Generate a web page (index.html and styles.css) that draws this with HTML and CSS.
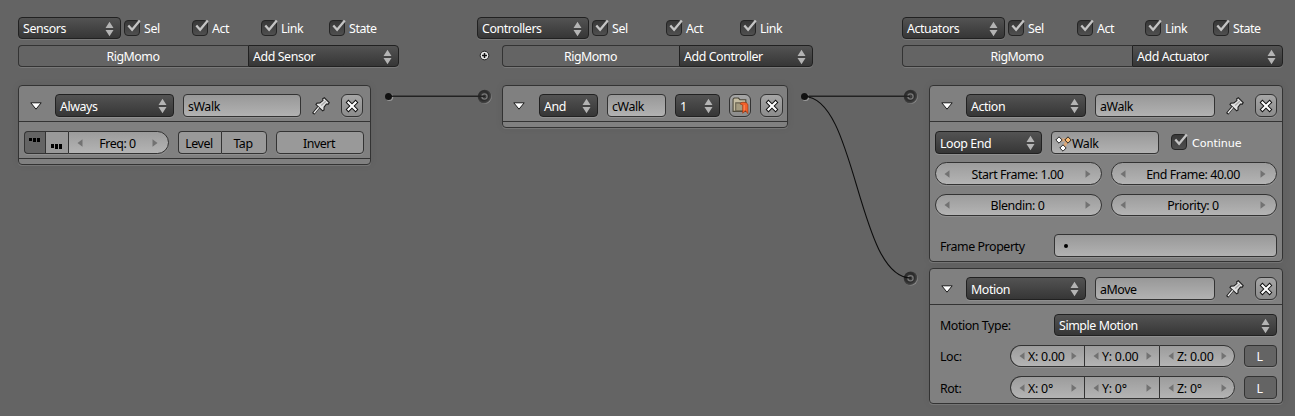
FILE: index.html
```
<!DOCTYPE html>
<html lang="en">
<head>
<meta charset="utf-8">
<title>Logic Editor</title>
<link rel="stylesheet" href="styles.css">
</head>
<body>
<svg class="defs" width="0" height="0">
  <defs>
    <symbol id="updown" viewBox="0 0 9 16"><path d="M4.5 .8 8.5 7H.5ZM.5 9h8L4.5 15.2Z" fill="#b4b4b4"/></symbol>
    <symbol id="check" viewBox="0 0 20 20"><rect x="1.5" y="3.500" width="15" height="15" rx="3.500" fill="url(#dark)" stroke="#252525"/><path d="M5.300 8.500 9.100 12.700 16.800 3.600" fill="none" stroke="#c4c4c4" stroke-width="2.300"/></symbol>
    <symbol id="tri" viewBox="0 0 12 8"><path d="M.8 .8H11.200L6 7.200Z" fill="#fff" stroke="#1a1a1a" stroke-linejoin="round"/></symbol>
    <symbol id="left" viewBox="0 0 6 8"><path d="M5.500 .3V7.700L.5 4Z" fill="#727272"/></symbol>
    <symbol id="right" viewBox="0 0 6 8"><path d="M.5 .3V7.700L5.500 4Z" fill="#727272"/></symbol>
    <symbol id="close" viewBox="0 0 14 14"><path d="M2 2 12 12M12 2 2 12" stroke="#111" stroke-width="4"/><path d="M2.700 2.700 11.300 11.300M11.300 2.700 2.700 11.300" stroke="#fff" stroke-width="2.100"/></symbol>
    <symbol id="pin" viewBox="0 0 16 16"><path d="M5.500 9.500 1 15" stroke="#222" stroke-width="2.600"/><path d="M9.500 1.500 11 .7 15.300 5 14.500 6.300 12.800 6.300 10.700 9 10.700 11.500 9.500 12.300 3.500 6.700 4.500 5.400 7 5.300 9.700 3.200Z" fill="#e2e2e2" stroke="#222"/><path d="M6 9.200 1.800 14.200" stroke="#f2f2f2" stroke-width="1.200"/><path d="M8.200 7.600 12.300 3.800" stroke="#aaa" stroke-width="1.300"/></symbol>
    <linearGradient id="dark" x1="0" y1="0" x2="0" y2="1"><stop offset="0" stop-color="#373737"/><stop offset="1" stop-color="#505050"/></linearGradient>
    <radialGradient id="ball" cx=".42" cy=".42" r=".62"><stop offset="0" stop-color="#444"/><stop offset=".55" stop-color="#2a2a2a"/><stop offset=".82" stop-color="#444"/><stop offset="1" stop-color="#aaa"/></radialGradient>
  </defs>
</svg>

<main class="editor">
  <section class="column sensors">
    <div class="filters">
      <div class="menu w103">Sensors<svg><use href="#updown"/></svg></div>
      <label class="toggle w68"><svg><use href="#check"/></svg>Sel</label>
      <label class="toggle w69"><svg><use href="#check"/></svg>Act</label>
      <label class="toggle w68"><svg><use href="#check"/></svg>Link</label>
      <label class="toggle"><svg><use href="#check"/></svg>State</label>
    </div>
    <div class="owner"><div class="name">RigMomo</div><div class="menu w151">Add Sensor<svg><use href="#updown"/></svg></div></div>
    <article class="brick">
      <header>
        <svg class="tri"><use href="#tri"/></svg>
        <div class="menu w119">Always<svg><use href="#updown"/></svg></div>
        <div class="field w118">sWalk</div>
        <svg class="pin"><use href="#pin"/></svg>
        <div class="btn square"><svg><use href="#close"/></svg></div>
      </header>
      <div class="row sense">
        <div class="group">
          <div class="btn pulse on"><svg viewBox="0 0 12 5" shape-rendering="crispEdges"><path d="M0 0h3v3H0zM4 0h3v4H4zM8 0h3v4H8z"/></svg></div>
          <div class="btn pulse low"><svg viewBox="0 0 12 5" shape-rendering="crispEdges"><path d="M0 0h3v4H0zM4 0h3v5H4zM8 0h3v5H8z"/></svg></div>
          <div class="num freq"><svg><use href="#left"/></svg><span>Freq: 0</span><svg><use href="#right"/></svg></div>
        </div>
        <div class="group"><div class="btn w44">Level</div><div class="btn w46">Tap</div></div>
        <div class="btn w88">Invert</div>
      </div>
      <footer></footer>
    </article>
  </section>

  <section class="column controllers">
    <div class="filters">
      <div class="menu w112">Controllers<svg><use href="#updown"/></svg></div>
      <label class="toggle w74"><svg><use href="#check"/></svg>Sel</label>
      <label class="toggle w74"><svg><use href="#check"/></svg>Act</label>
      <label class="toggle"><svg><use href="#check"/></svg>Link</label>
    </div>
    <div class="owner">
      <svg class="plus" viewBox="0 0 11 11"><circle cx="5.500" cy="5.500" r="4.300" fill="#e8e8e8" stroke="#222"/><path d="M5.500 3v5M3 5.500h5" stroke="#111" stroke-width="1.500"/></svg>
      <div class="name">RigMomo</div><div class="menu w134">Add Controller<svg><use href="#updown"/></svg></div>
    </div>
    <article class="brick">
      <header>
        <svg class="tri"><use href="#tri"/></svg>
        <div class="menu w59">And<svg><use href="#updown"/></svg></div>
        <div class="field w59">cWalk</div>
        <div class="menu w45">1<svg><use href="#updown"/></svg></div>
        <div class="btn square mark"><svg viewBox="0 0 16 16"><path d="M1 13.500V2L2 1H6L7.500 2.500H13V13.500Z" fill="#c4bca2" stroke="#4a4639"/><path d="M3.500 13V5.500H13.500V13Z" fill="#a49b80" stroke="#686250"/><path d="M7.500 6.500C8 4.500 14.500 4 15 7.500V15.800L12.800 13 10 15.300V7.500Z" fill="#f2602a" stroke="#8d2b08" stroke-width=".5"/><path d="M11.500 12.500V7.500" stroke="#ff9468" stroke-width=".8"/></svg></div>
        <div class="btn square"><svg><use href="#close"/></svg></div>
      </header>
      <footer></footer>
    </article>
  </section>

  <section class="column actuators">
    <div class="filters">
      <div class="menu w103">Actuators<svg><use href="#updown"/></svg></div>
      <label class="toggle w69"><svg><use href="#check"/></svg>Sel</label>
      <label class="toggle w68"><svg><use href="#check"/></svg>Act</label>
      <label class="toggle w68"><svg><use href="#check"/></svg>Link</label>
      <label class="toggle"><svg><use href="#check"/></svg>State</label>
    </div>
    <div class="owner"><div class="name">RigMomo</div><div class="menu w151">Add Actuator<svg><use href="#updown"/></svg></div></div>
    <article class="brick">
      <header>
        <svg class="tri"><use href="#tri"/></svg>
        <div class="menu w120">Action<svg><use href="#updown"/></svg></div>
        <div class="field w120">aWalk</div>
        <svg class="pin"><use href="#pin"/></svg>
        <div class="btn square"><svg><use href="#close"/></svg></div>
      </header>
      <div class="body action">
        <div class="row">
          <div class="menu w107">Loop End<svg><use href="#updown"/></svg></div>
          <div class="field w108 withicon"><svg viewBox="0 0 17 16"><path d="M4 4h9L8 12" fill="none" stroke="#dca878" stroke-width="3"/><g stroke="#222" fill="#fff"><path d="M4 .8l3.200 3.200L4 7.200.8 4z"/><path d="M13 .8l3.200 3.200L13 7.200 9.800 4z" fill="#f9bb74"/><path d="M8 8.800l3.200 3.200L8 15.200 4.800 12z"/></g></svg>Walk</div>
          <label class="toggle wide"><svg><use href="#check"/></svg>Continue</label>
        </div>
        <div class="row"><div class="num round w167"><svg><use href="#left"/></svg><span>Start Frame: 1.00</span><svg><use href="#right"/></svg></div><div class="num round w166"><svg><use href="#left"/></svg><span>End Frame: 40.00</span><svg><use href="#right"/></svg></div></div>
        <div class="row"><div class="num round w167"><svg><use href="#left"/></svg><span>Blendin: 0</span><svg><use href="#right"/></svg></div><div class="num round w166"><svg><use href="#left"/></svg><span>Priority: 0</span><svg><use href="#right"/></svg></div></div>
        <div class="row prop"><span class="label">Frame Property</span><div class="field w223 dot"><i></i></div></div>
      </div>
    </article>
    <article class="brick">
      <header>
        <svg class="tri"><use href="#tri"/></svg>
        <div class="menu w120">Motion<svg><use href="#updown"/></svg></div>
        <div class="field w120">aMove</div>
        <svg class="pin"><use href="#pin"/></svg>
        <div class="btn square"><svg><use href="#close"/></svg></div>
      </header>
      <div class="body motion">
        <div class="row prop"><span class="label">Motion Type:</span><div class="menu w223">Simple Motion<svg><use href="#updown"/></svg></div></div>
        <div class="row"><span class="label">Loc:</span><div class="group axes"><div class="num"><svg><use href="#left"/></svg><span>X: 0.00</span><svg><use href="#right"/></svg></div><div class="num"><svg><use href="#left"/></svg><span>Y: 0.00</span><svg><use href="#right"/></svg></div><div class="num"><svg><use href="#left"/></svg><span>Z: 0.00</span><svg><use href="#right"/></svg></div></div><div class="btn on w33">L</div></div>
        <div class="row"><span class="label">Rot:</span><div class="group axes"><div class="num"><svg><use href="#left"/></svg><span>X: 0°</span><svg><use href="#right"/></svg></div><div class="num"><svg><use href="#left"/></svg><span>Y: 0°</span><svg><use href="#right"/></svg></div><div class="num"><svg><use href="#left"/></svg><span>Z: 0°</span><svg><use href="#right"/></svg></div></div><div class="btn on w33">L</div></div>
      </div>
    </article>
  </section>

  <svg class="links" viewBox="0 0 1295 416">
    <g fill="#999"><circle cx="389.500" cy="97.300" r="3.700"/><circle cx="805.500" cy="97.300" r="3.700"/></g>
    <g fill="url(#ball)"><circle cx="484.700" cy="96.800" r="7"/><circle cx="910.700" cy="96.800" r="7"/><circle cx="910.700" cy="278.500" r="7"/></g>
    <g fill="none" stroke="#777" stroke-width="1.300"><circle cx="484.500" cy="96.500" r="2.600"/><circle cx="910.500" cy="96.500" r="2.600"/><circle cx="910.500" cy="278.200" r="2.600"/></g>
    <path d="M388 96.200H485M804 96.200H910" stroke="#222" stroke-width="1.500"/>
    <path d="M804 96.500C857 96.500 857 278 911 278" fill="none" stroke="#0c0c0c" stroke-width="1.100"/>
    <g fill="#111"><circle cx="388.500" cy="96.500" r="3.500"/><circle cx="804.500" cy="96.500" r="3.500"/></g>
  </svg>
</main>
</body>
</html>
```

FILE: styles.css
```
* { box-sizing: border-box; }
body { margin: 0; background: #646464; font: 12.4px/20px "Noto Sans", "Open Sans", sans-serif; letter-spacing: -.42px; color: #000; }
.defs { position: absolute; }
.editor { position: relative; width: 1295px; height: 416px; overflow: hidden; display: flex; padding: 17px 0 0 18px; }
.column { flex: none; }
.sensors { width: 459px; }
.controllers { width: 425px; }
.actuators { width: 381px; }
.links { position: absolute; inset: 0; width: 1295px; height: 416px; }
.filters { display: flex; height: 22px; margin-bottom: 6px; }
.filters .menu { margin-right: 2px; }
.menu, .field, .btn, .num { height: 23px; flex: none; border: 1px solid #333; border-radius: 4px; box-shadow: 0 1px 0 rgba(255,255,255,.13); white-space: nowrap; display: flex; align-items: center; padding-top: 2px; }
.filters .menu, .owner .menu, .owner .name { height: 22px; }
.menu { background: linear-gradient(#535353, #363636); border-color: #212121; color: #fff; padding: 2px 6px 0 4px; justify-content: space-between; }
.menu svg { width: 9px; height: 16px; margin-top: -2px; }
.filters .menu, .owner .menu, .motion .prop .menu { padding-top: 1px; }
.filters .menu svg, .owner .menu svg, .motion .prop .menu svg { margin-top: 0; }
.field { background: linear-gradient(#989898, #b2b2b2); padding-left: 4px; }
.btn { background: #999; justify-content: center; padding-right: 2px; }
.btn.on { background: #646464; color: #fff; }
.btn.square { width: 22px; padding: 0; border-radius: 6px; background: linear-gradient(#a6a6a6, #8c8c8c); }
.square svg { width: 14px; height: 14px; flex: none; }
.square.mark svg { width: 17px; height: 17px; }
.toggle { display: flex; color: #fff; flex: none; }
.toggle svg { width: 20px; height: 20px; flex: none; margin-right: 1px; }
.filters .toggle { line-height: 23px; }
.owner { display: flex; height: 22px; margin-bottom: 18px; width: 381px; }
.owner .name { flex: 1; border: 1px solid #333; border-right: 0; border-radius: 4px 0 0 4px; text-align: center; color: #fff; line-height: 21px; padding-right: 1px; letter-spacing: -.5px; box-shadow: 0 1px 0 rgba(255,255,255,.13); }
.owner .menu { border-radius: 0 4px 4px 0; }
.controllers .owner { width: 336px; }
.plus { width: 11px; height: 11px; margin: 5px 12px 0 2px; }
.brick { background: #808080; border: 1px solid #333; border-radius: 4px; box-shadow: 0 1px 0 rgba(255,255,255,.13), 0 0 8px rgba(0,0,0,.06); width: 353px; }
.brick header { height: 36px; border-bottom: 1px solid #333; display: flex; align-items: center; padding: 4px 5px 0 10.500px; }
header .menu, header .field { margin-right: 9px; }
.tri { width: 12px; height: 8px; margin: 1px 13.500px 0 0; flex: none; }
.controllers header .tri { margin: 1px 14.500px 0 -1px; }
.pin { width: 18px; height: 18px; margin: 0 11px 0 2px; flex: none; }
.row { display: flex; }
.sense { height: 36px; padding: 9px 5px 4px; gap: 9px; }
.brick footer { height: 6px; border-top: 1px solid #333; }
.controllers .brick footer { height: 5px; border-top: 0; }
.group { display: flex; }
.group > * { border-radius: 0; border-right: 0; }
.group > :first-child { border-radius: 4px 0 0 4px; }
.group > :last-child { border-right: 1px solid #333; border-radius: 0 4px 4px 0; }
.btn.pulse { width: 21px; align-items: flex-start; justify-content: flex-start; padding: 6px 0 0 4px; }
.btn.pulse.low { width: 23px; padding: 12px 0 0 5px; }
.pulse svg { width: 12px; height: 5px; flex: none; }
.num { background: linear-gradient(#9c9c9c, #b4b4b4); justify-content: space-between; padding: 0 10px 0 8px; }
.num span { padding-top: 2px; }
.num svg { width: 6px; height: 8px; flex: none; }
.num.round { border-radius: 12px; }
.group > .num.freq { width: 101px; border-radius: 0 12px 12px 0; }
.controllers .brick { width: 286px; margin-left: 25px; }
.controllers .mark { margin-right: 9px; }
.controllers .square:last-child { width: 23px; }
.actuators .brick { width: 354px; margin-left: 27px; }
.actuators .brick + .brick { margin-top: 6px; }
.action { height: 139px; padding: 9px 5px 0; }
.action .row { height: 23px; margin-bottom: 8px; gap: 9px; }
.action .row:nth-child(3) { height: 22px; margin: 9px 0 18px; }
.action .row:nth-child(3) .num { height: 22px; }
.action .row:nth-child(3) span { padding-top: 1px; }
.toggle.wide { font: 11.200px/25px "DejaVu Sans", sans-serif; letter-spacing: -.1px; margin-left: 2px; }
.toggle.wide svg { margin-right: 2px; }
.withicon { padding-left: 3px; }
.withicon svg { width: 17px; height: 16px; flex: none; }
.row.prop { justify-content: space-between; }
.label { padding-left: 5px; line-height: 24px; }
.action .label { line-height: 25px; }
.dot i { width: 4px; height: 4px; border-radius: 50%; background: #000; margin: -1px 0 0 5px; }
.motion { height: 98px; padding: 9px 5px 0; }
.motion .row { height: 22px; margin-bottom: 9px; }
.motion .menu, .motion .num, .motion .btn { height: 22px; }
.motion .btn { padding-top: 1px; }
.motion .row:last-child { height: 23px; margin-bottom: 0; }
.motion .row:last-child .num, .motion .row:last-child .btn { height: 23px; }
.motion .row:last-child .btn { padding-top: 2px; }
.motion .row:last-child .label { line-height: 25px; }
.motion .row .label { width: 75px; white-space: nowrap; }
.axes { margin-right: 9px; }
.axes .num { width: 75px; padding: 0 7px 0 8px; }
.axes .num span { flex: 1; padding: 1px 0 0 3px; letter-spacing: -.25px; }
.motion .row:last-child .num span { padding-top: 2px; }
.group.axes > :first-child { width: 74px; border-radius: 12px 0 0 12px; }
.group.axes > :last-child { width: 76px; border-radius: 0 12px 12px 0; }
.w33 { width: 33px; } .w44 { width: 43px; } .w45 { width: 45px; } .w46 { width: 46px; } .w59 { width: 59px; }
.w68 { width: 68px; } .w69 { width: 69px; } .w74 { width: 74px; } .w88 { width: 88px; }
.w103 { width: 103px; } .w107 { width: 107px; } .w108 { width: 108px; } .w112 { width: 112px; }
.w118 { width: 118px; } .w119 { width: 119px; } .w120 { width: 120px; } .w134 { width: 134px; }
.w151 { width: 151px; } .w166 { width: 166px; } .w167 { width: 167px; } .w223 { width: 223px; }
```
